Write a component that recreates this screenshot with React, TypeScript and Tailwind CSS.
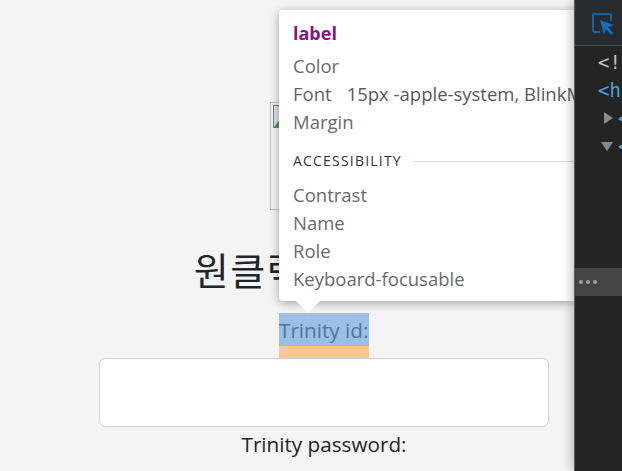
export default function App() {
  const font = { fontFamily: '"Open Sans", "Noto Sans CJK KR", sans-serif' };
  return (
    <div className="relative flex h-[471px] w-[622px] overflow-hidden bg-[#f4f4f4]" style={font}>
      <main className="flex h-full w-[574px] shrink-0 flex-col items-center pl-[74px] pt-[102px]">
        <div className="h-[108px] w-[108px] shrink-0 border border-[#c0c0c0] p-[2px]">
          <svg className="block" width="22" height="23" viewBox="0 0 22 23">
            <rect x="0.5" y="0.5" width="21" height="22" fill="#d5e2ef" stroke="#7f7f7f" />
            <path d="M1 22 L8 13 L14 22 Z" fill="#4f9a3a" />
          </svg>
        </div>
        <h1 className="mt-[38px] h-[44px] pl-[6px] text-[38px] font-normal leading-[44px] tracking-[1.5px] text-[#212529] whitespace-nowrap">원클릭 로그인창</h1>
        <label className="mt-[21px] flex h-[45px] w-[90px] flex-col bg-[#f6c992]">
          <span className="h-[33px] bg-[#9cbfe6] text-[20.7px] leading-[35px] whitespace-nowrap text-[#50759f]">Trinity id:</span>
        </label>
        <input className="h-[69px] w-[450px] shrink-0 rounded-[6px] border border-[#ced4da] bg-white" />
        <label className="mt-[2px] text-[20.7px] leading-[30px] whitespace-nowrap text-[#212529]">Trinity password:</label>
      </main>
      <aside className="z-10 flex h-full min-w-0 flex-1 flex-col overflow-hidden border-l border-[#5c5c5c] bg-[#242424] text-[19px] leading-[28px] shadow-[0_0_12px_rgba(0,0,0,0.35)]" style={{ fontFamily: '"DejaVu Sans Mono", monospace' }}>
        <div className="flex h-[46px] shrink-0 items-center border-b border-[#494949] bg-[#292a2d] pl-[16px]">
          <svg width="24" height="24" viewBox="0 0 24 24" fill="none">
            <path d="M9 21H3a2 2 0 0 1-1-1V4a2 2 0 0 1 1-1h16a2 2 0 0 1 1 1v6" stroke="#0f62a8" strokeWidth="2" />
            <path d="M9 9l14 5-6 2 5 6-2 2-5-6-2 6z" fill="#0f6fc0" />
          </svg>
        </div>
        <div className="flex flex-col pt-[2px] whitespace-nowrap">
          <div className="pl-[23px] text-[#c0c0c0]">&lt;!<span className="text-[#4aa3e0]">DOCTYPE</span></div>
          <div className="pl-[23px] text-[#4aa3e0]">&lt;html</div>
          <div className="flex items-center gap-[5px] pl-[29px] text-[#4aa3e0]"><span className="h-0 w-0 border-y-[6px] border-l-[9px] border-y-transparent border-l-[#8a8a8a]" />&lt;head</div>
          <div className="flex items-center gap-[5px] pl-[26px] text-[#4aa3e0]"><span className="h-0 w-0 border-x-[6px] border-t-[9px] border-x-transparent border-t-[#8a8a8a]" />&lt;body</div>
        </div>
        <div className="mt-[108px] flex h-[28px] items-center gap-[3px] bg-[#454545] pl-[4px]">
          <span className="h-[4px] w-[4px] rounded-full bg-[#a0a0a0]" />
          <span className="h-[4px] w-[4px] rounded-full bg-[#a0a0a0]" />
          <span className="h-[4px] w-[4px] rounded-full bg-[#a0a0a0]" />
        </div>
      </aside>
      <div className="absolute left-[279px] top-[10px] h-[291px] w-[295px] rounded-l-[4px] bg-white pl-[14px] text-[18.5px] shadow-[0_2px_10px_rgba(0,0,0,0.35)]">
        <div className="overflow-hidden whitespace-nowrap leading-[28px] text-[#6a6a6a]">
          <div className="pt-[9px] text-[18px] font-bold text-[#881280]">label</div>
          <div className="mt-[5px]">Color</div>
          <div className="text-[#5f6368]">Font<span className="ml-[15px] text-[#555a61]">15px -apple-system, BlinkMacSystemFont</span></div>
          <div>Margin</div>
          <div className="mt-[11px] flex items-center gap-[11px]">
            <span className="text-[14px] font-medium tracking-[1.2px] text-[#333]">ACCESSIBILITY</span>
            <span className="h-px flex-1 bg-[#dcdcdc]" />
          </div>
          <div className="mt-[6px]">Contrast</div>
          <div>Name</div>
          <div>Role</div>
          <div>Keyboard-focusable</div>
        </div>
        <span className="absolute left-[17px] top-[291px] h-0 w-0 border-x-[12px] border-t-[12px] border-x-transparent border-t-white" />
      </div>
    </div>
  );
}
